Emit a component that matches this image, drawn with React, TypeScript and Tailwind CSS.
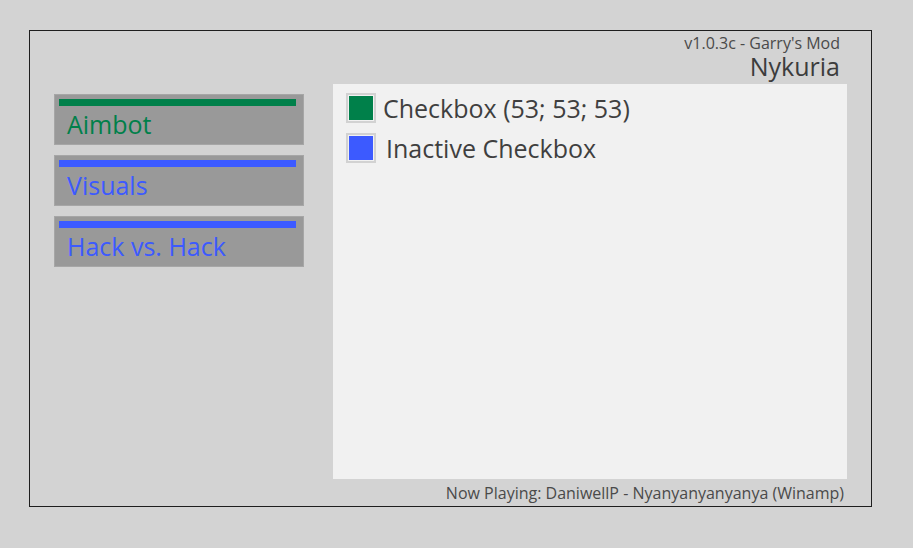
const tabs = [
  { label: "Aimbot", active: true },
  { label: "Visuals", active: false },
  { label: "Hack vs. Hack", active: false },
];

const options = [
  { label: "Checkbox (53; 53; 53)", active: true, gap: "gap-[7px]" },
  { label: "Inactive Checkbox", active: false, gap: "gap-[10px]" },
];

export default function App() {
  return (
    <div
      className="h-[548px] w-[913px] bg-[#d3d3d3] pt-[30px] pl-[29px]"
      style={{ fontFamily: '"Open Sans", "Noto Sans", sans-serif' }}
    >
      <div className="flex h-[477px] w-[843px] flex-col border border-[#1e1e1e] bg-[#d3d3d3]">
        <div className="flex h-[53px] flex-col items-end pt-[3px] pr-[31px]">
          <div className="text-[16px] leading-[19px] text-[#4a4a4a]">v1.0.3c - Garry's Mod</div>
          <div className="text-[25px] leading-[27px] text-[#3c3c3c]">Nykuria</div>
        </div>

        <div className="flex items-start">
          <div className="mt-[10px] ml-[24px] flex w-[250px] flex-col gap-[10px]">
            {tabs.map((tab) => (
              <div
                key={tab.label}
                className="h-[51px] border border-[#a6a6a6] bg-[#999999] px-[4px] pt-[4px]"
              >
                <div className={`h-[7px] w-[237px] ${tab.active ? "bg-[#00804a]" : "bg-[#3c5aff]"}`} />
                <div
                  className={`pl-[8px] text-[25px] leading-[36px] ${tab.active ? "text-[#00804a]" : "text-[#3c5aff]"}`}
                >
                  {tab.label}
                </div>
              </div>
            ))}
          </div>

          <div className="ml-[29px] flex h-[395px] w-[514px] flex-col gap-[10px] bg-[#f1f1f1] pt-[9px] pl-[13px]">
            {options.map((opt) => (
              <div key={opt.label} className={`flex h-[30px] items-center ${opt.gap}`}>
                <div className="h-[30px] w-[30px] border-2 border-[#d2d2d2] bg-[#f1f1f1] p-[1px]">
                  <div className={`h-full w-full ${opt.active ? "bg-[#00804a]" : "bg-[#3c5aff]"}`} />
                </div>
                <span className="text-[25px] leading-none text-[#3f3f3f]">{opt.label}</span>
              </div>
            ))}
          </div>
        </div>

        <div className="flex flex-1 items-center justify-end pr-[27px]">
          <span className="text-[16px] leading-none text-[#4a4a4a]">
            Now Playing: DaniwellP - Nyanyanyanyanya (Winamp)
          </span>
        </div>
      </div>
    </div>
  );
}
